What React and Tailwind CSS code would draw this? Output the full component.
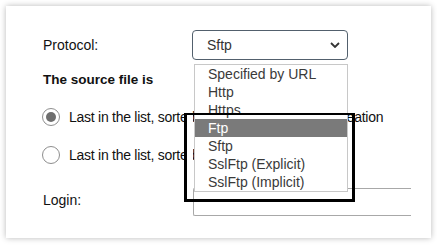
import { useState } from 'react';

const options = [
  'Specified by URL',
  'Http',
  'Https',
  'Ftp',
  'Sftp',
  'SslFtp (Explicit)',
  'SslFtp (Implicit)',
];

function Radio({ checked, label }) {
  return (
    <label className="flex items-center h-[20px]">
      <span className="flex items-center justify-center w-[18px] h-[18px] rounded-full border border-[#8e8e8e] bg-white">
        {checked && <span className="w-[10px] h-[10px] rounded-full bg-[#6e6e6e]" />}
      </span>
      <span className="ml-[9px] text-[14px] leading-[20px] text-[#111] whitespace-nowrap tracking-[-0.26px]">
        {label}
      </span>
    </label>
  );
}

export default function App() {
  const [active] = useState('Ftp');

  return (
    <div className="w-[437px] h-[245px] bg-white pt-[6px] pl-[6px] font-['Liberation_Sans',Arial,sans-serif]">
      <div className="relative w-[425px] h-[232px] bg-white shadow-[0_0_6px_rgba(0,0,0,0.28)] pt-[24px] pl-[37px]">
        <div className="flex items-center h-[30px]">
          <span className="w-[149px] text-[14px] text-[#111]">Protocol:</span>
          <div className="relative">
            <div className="flex items-center w-[156px] h-[30px] rounded-[4px] border border-[#52606d] pl-[14px] pr-[6px] text-[14px] text-[#333]">
              <span className="flex-1">Sftp</span>
              <svg width="10" height="6" viewBox="0 0 10 6" className="mr-[1px]">
                <path d="M1 1l4 4 4-4" fill="none" stroke="#333" strokeWidth="1.8" />
              </svg>
            </div>
            <ul className="absolute z-20 left-[2px] top-[34px] w-[154px] border border-[#c8c8c8] bg-white">
              {options.map((o) => (
                <li
                  key={o}
                  className={
                    'h-[18px] leading-[18px] pl-[13px] text-[14px] ' +
                    (o === active ? 'bg-[#7a7a7a] text-white' : 'text-[#3a3a3a]')
                  }
                >
                  {o}
                </li>
              ))}
            </ul>
          </div>
        </div>

        <div className="mt-[10px] h-[20px] leading-[20px] text-[13.5px] font-bold text-[#111]">
          The source file is
        </div>

        <div className="mt-[17px] ml-[-1px]">
          <Radio checked label="Last in the list, sorted by the date of the file's creation" />
        </div>
        <div className="mt-[18px] ml-[-1px]">
          <Radio label="Last in the list, sorted by name" />
        </div>

        <div className="flex mt-[23px]">
          <span className="w-[150px] mt-[2px] leading-[20px] text-[14px] text-[#111]">Login:</span>
          <div className="w-[218px] h-[28px] border-l border-y border-[#a8a8a8] rounded-l-[2px]" />
        </div>

        <div className="absolute z-10 left-[179px] top-[109px] w-[8px] h-[73px] bg-white" />
        <div className="absolute z-30 left-[178px] top-[107px] w-[171px] h-[89px] border-[3px] border-t-2 border-black" />
      </div>
    </div>
  );
}
